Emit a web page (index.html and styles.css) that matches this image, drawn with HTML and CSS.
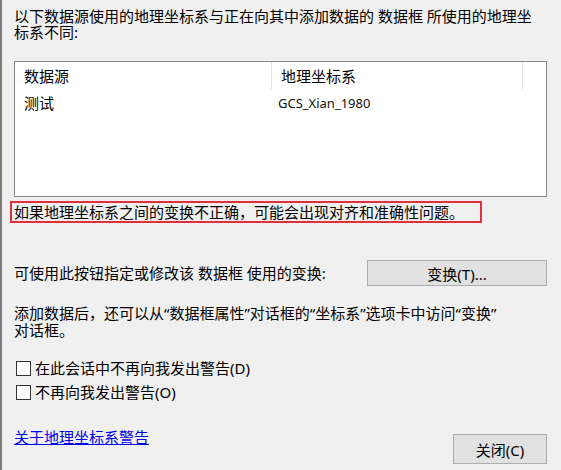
FILE: index.html
```html
<!DOCTYPE html>
<html lang="zh-CN">
<head>
	<meta charset="UTF-8">
	<title>地理坐标系警告</title>
	<link rel="stylesheet" href="styles.css">
</head>
<body>
	<div class="dialog">
		<p class="intro">以下数据源使用的地理坐标系与正在向其中添加数据的 数据框 所使用的地理坐标系不同:</p>
		<div class="listBox">
			<div class="listHead">
				<span class="col colName">数据源</span>
				<span class="col colGcs">地理坐标系</span>
				<span class="col colRest"></span>
			</div>
			<div class="listRow">
				<span class="col colName">测试</span>
				<span class="col colGcs gcsText">GCS_Xian_1980</span>
			</div>
		</div>
		<p class="warn">如果地理坐标系之间的变换不正确，可能会出现对齐和准确性问题。</p>
		<div class="transRow">
			<span>可使用此按钮指定或修改该 数据框 使用的变换:</span>
			<button class="btn btnTrans">变换(T)...</button>
		</div>
		<p class="note">添加数据后，还可以从“数据框属性”对话框的“坐标系”选项卡中访问“变换”对话框。</p>
		<ul class="checks">
			<li><span class="box"></span>在此会话中不再向我发出警告(D)</li>
			<li><span class="box"></span>不再向我发出警告(O)</li>
		</ul>
		<div class="footer">
			<a class="link" href="#">关于地理坐标系警告</a>
			<button class="btn btnClose">关闭(C)</button>
		</div>
	</div>
</body>
</html>
```
FILE: styles.css
```css
*{
	margin: 0;
	padding: 0;
	box-sizing: border-box;
}
body{
	background-color: #f0f0f0;
	font-family: "Noto Sans", "Noto Sans CJK SC", sans-serif;
	font-size: 15px;
	line-height: 16px;
	color: #000;
}
ul{
	list-style: none;
}
.dialog{
	height: 470px;
	border-left: 2px solid #7a7a7a;
	padding: 8px 14px 0 12px;
}
.intro{
	width: 525px;
}
.listBox{
	margin-top: 21px;
	height: 136px;
	border: 1px solid #828790;
	background-color: #fff;
}
.listHead,
.listRow{
	display: flex;
	height: 26px;
	align-items: center;
}
.listHead{
	height: 28px;
}
.col{
	padding-left: 9px;
}
.colName{
	width: 256px;
}
.colGcs{
	width: 252px;
}
.listHead .col{
	height: 28px;
	line-height: 28px;
}
.listHead .colGcs{
	border-left: 1px solid #e5e5e5;
	border-right: 1px solid #e5e5e5;
}
.gcsText{
	padding-left: 7px;
	font-size: 13px;
	color: #111;
}
.warn{
	display: inline-block;
	margin: 4px 0 0 -4px;
	padding: 1px 16px 0 2px;
	border: 2px solid #e0303e;
	height: 22px;
}
.transRow{
	display: flex;
	justify-content: space-between;
	align-items: center;
	margin-top: 37px;
}
.btn{
	font-family: inherit;
	font-size: 15px;
	color: #000;
	background-color: #e1e1e1;
	border: 1px solid #adadad;
}
.btnTrans{
	width: 180px;
	height: 26px;
}
.note{
	width: 490px;
	margin-top: 19px;
	line-height: 17px;
}
.checks{
	margin-top: 17px;
}
.checks li{
	display: flex;
	align-items: center;
	height: 24px;
}
.box{
	width: 15px;
	height: 15px;
	border: 1px solid #333;
	background-color: #fff;
	margin: 0 4px 0 2px;
}
.footer{
	display: flex;
	justify-content: space-between;
	align-items: flex-start;
	margin-top: 19px;
}
.link{
	color: #0000ee;
	text-decoration: underline;
	margin-top: 6px;
}
.btnClose{
	width: 94px;
	height: 30px;
	margin-top: 11px;
}
```
